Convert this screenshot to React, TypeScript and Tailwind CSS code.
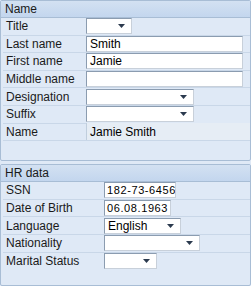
import React from "react";

function Arrow() {
  return (
    <svg width="7" height="4" viewBox="0 0 7 4" className="block">
      <path d="M0 0h7L3.5 4z" fill="#2b3a4e" />
    </svg>
  );
}

function Row({ label, children, last }: { label: string; children?: React.ReactNode; last?: boolean }) {
  return (
    <div className={"flex items-center h-[17.6px] " + (last ? "" : "border-b border-[#c9d7e8]")}>
      <div className="w-[var(--lw)] shrink-0 pl-[3px] text-[12px] text-[#1a1a1a] whitespace-nowrap">{label}</div>
      {children}
    </div>
  );
}

function Input({ w, value, mono }: { w: string; value?: string; mono?: boolean }) {
  return (
    <div
      className={
        "h-[16px] bg-white border border-[#8b9cb0] border-r-[#c8d0da] border-b-[#c8d0da] flex items-center px-[3px] text-black whitespace-nowrap overflow-hidden " +
        w +
        (mono ? " text-[11px] tracking-[0.6px] pl-[2px]" : " text-[12px]")
      }
    >
      {value}
    </div>
  );
}

function Select({ w, value }: { w: string; value?: string }) {
  return (
    <div
      className={
        "h-[16px] bg-white border border-[#8b9cb0] border-r-[#c8d0da] border-b-[#c8d0da] flex items-center justify-between pl-[3px] pr-[6px] text-[12px] text-black " +
        w
      }
    >
      <span>{value}</span>
      <Arrow />
    </div>
  );
}

function Panel({ title, children, lw, extra }: { title: string; children: React.ReactNode; lw: string; extra: string }) {
  return (
    <div
      className="border border-[#a8bdd5] rounded-[2px] bg-[#dfe9f6]"
      style={{ ["--lw" as any]: lw }}
    >
      <div className="h-[17px] bg-gradient-to-b from-[#d3e1f2] to-[#c3d6ee] border-b border-[#a8bdd5] pl-[4px] text-[12px] leading-[17px] text-[#1a1a1a]">
        {title}
      </div>
      <div className="pl-[2px]">{children}</div>
      <div className={extra} />
    </div>
  );
}

export default function App() {
  return (
    <div className="w-[251px] h-[286px] bg-[#dfe9f6] overflow-hidden font-['Liberation_Sans',Arial,sans-serif]">
      <Panel title="Name" lw="83px" extra="h-[19px]">
        <Row label="Title">
          <Select w="w-[46px]" />
        </Row>
        <Row label="Last name">
          <Input w="w-[157px]" value="Smith" />
        </Row>
        <Row label="First name">
          <Input w="w-[157px]" value="Jamie" />
        </Row>
        <Row label="Middle name">
          <Input w="w-[157px]" />
        </Row>
        <Row label="Designation">
          <Select w="w-[108px]" />
        </Row>
        <Row label="Suffix">
          <Select w="w-[108px]" />
        </Row>
        <Row label="Name">
          <div className="h-[17px] flex-1 bg-[#e6edf5] border-l border-[#c0cedd] flex items-center px-[3px] text-[12px] text-black">
            Jamie Smith
          </div>
        </Row>
      </Panel>
      <div className="h-[3px]" />
      <Panel title="HR data" lw="101px" extra="h-[15px]">
        <Row label="SSN">
          <Input w="w-[72px]" value="182-73-6456" mono />
        </Row>
        <Row label="Date of Birth">
          <Input w="w-[67px]" value="06.08.1963" mono />
        </Row>
        <Row label="Language">
          <Select w="w-[77px]" value="English" />
        </Row>
        <Row label="Nationality">
          <Select w="w-[96px]" />
        </Row>
        <Row label="Marital Status" last>
          <Select w="w-[53px]" />
        </Row>
      </Panel>
    </div>
  );
}
